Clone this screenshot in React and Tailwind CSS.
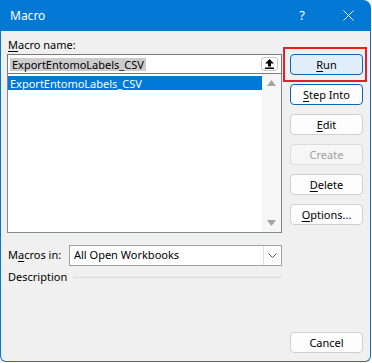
import React from "react";

const font = { fontFamily: "'Noto Sans', 'Open Sans', sans-serif" };

const Btn = ({ children, variant = "normal" }) => {
  const styles = {
    primary: "border-[#0067c0] bg-[#e0eef9] text-black",
    focus: "border-[#0067c0] bg-[#fdfdfd] text-black",
    normal: "border-[#d0d0d0] bg-[#fdfdfd] text-black",
    disabled: "border-[#dcdcdc] bg-[#f6f6f6] text-[#a0a0a0]",
  };
  return (
    <div
      className={`flex h-[21px] w-[73px] items-center justify-center rounded-[4px] border text-[11px] leading-none ${styles[variant]}`}
    >
      {children}
    </div>
  );
};

const U = ({ children }) => <span className="underline underline-offset-2">{children}</span>;

export default function App() {
  return (
    <div className="relative h-[363px] w-[372px] bg-white" style={font}>
      <div className="flex h-[362px] w-[371px] flex-col overflow-hidden rounded-tr-[8px] rounded-b-[6px] bg-[#0078d4]">
        {/* Title bar */}
        <div className="flex h-[31px] shrink-0 items-center pl-[10px] text-[12px] text-white">
          <span>Macro</span>
          <span className="ml-auto mr-[38px] text-[13px]">?</span>
          <svg width="11" height="11" viewBox="0 0 11 11" className="mr-[17px]">
            <path d="M0.5 0.5 L10.5 10.5 M10.5 0.5 L0.5 10.5" stroke="white" strokeWidth="1" />
          </svg>
        </div>

        {/* Body */}
        <div className="mx-px mb-px flex flex-1 rounded-b-[5px] bg-[#f0f0f0] pl-[6px] pr-[6px]">
          {/* Left column */}
          <div className="flex w-[275px] flex-col">
            <div className="mt-[6px] mb-px h-[16px] pl-px text-[11px] leading-[16px] text-black">
              <U>M</U>acro name:
            </div>
            <div className="flex h-[20px] items-center border border-[#7a7a7a] bg-white pl-[2px] pr-[2px]">
              <span className="bg-[#cccccc] px-[2px] text-[11px] leading-[13px] text-black">ExportEntomoLabels_CSV</span>
              <div className="ml-auto mr-[1px] flex h-[14px] w-[17px] items-center justify-center rounded-[3px] border border-[#c8c8c8] bg-white">
                <svg width="9" height="10" viewBox="0 0 9 10">
                  <path d="M4.5 0 L9 4.5 L6 4.5 L6 7.5 L3 7.5 L3 4.5 L0 4.5 Z" fill="black" />
                  <rect x="0" y="8.5" width="9" height="1.5" fill="black" />
                </svg>
              </div>
            </div>
            <div className="flex h-[159px] border border-t-0 border-[#828790] bg-white">
              <div className="flex-1 pt-[2px]">
                <div className="flex h-[14px] items-center bg-[#0078d7] pl-[2px] text-[11px] leading-none text-white">
                  ExportEntomoLabels_CSV
                </div>
              </div>
              <div className="flex w-[19px] flex-col items-center justify-between bg-[#f6f6f6] py-[6px]">
                <svg width="9" height="6" viewBox="0 0 9 6">
                  <path d="M4.5 0 L9 6 L0 6 Z" fill="#a3a3a3" />
                </svg>
                <svg width="9" height="6" viewBox="0 0 9 6">
                  <path d="M0 0 L9 0 L4.5 6 Z" fill="#a3a3a3" />
                </svg>
              </div>
            </div>

            <div className="mt-[12px] flex h-[21px] items-center">
              <div className="w-[62px] pl-px text-[11px] text-black">
                M<U>a</U>cros in:
              </div>
              <div className="flex h-[21px] flex-1 items-center border border-[#a0a0a0] bg-white pl-[4px] text-[11px] text-black">
                <span>All Open Workbooks</span>
                <div className="ml-auto flex h-full w-[18px] items-center justify-center border-l border-[#e0e0e0]">
                  <svg width="9" height="5" viewBox="0 0 9 5">
                    <path d="M0.5 0.5 L4.5 4.5 L8.5 0.5" stroke="#555" strokeWidth="1" fill="none" />
                  </svg>
                </div>
              </div>
            </div>

            <div className="mt-[3px] flex h-[16px] items-center gap-[6px] pl-px">
              <span className="text-[11px] text-black">Description</span>
              <div className="h-px flex-1 bg-[#dcdcdc]" />
            </div>
          </div>

          {/* Right column */}
          <div className="ml-[8px] flex flex-col pt-[23px] pb-[8px]">
            <div className="flex flex-col gap-[9px]">
              <Btn variant="primary">
                <U>R</U>un
              </Btn>
              <Btn variant="focus">
                <U>S</U>tep Into
              </Btn>
              <Btn>
                <U>E</U>dit
              </Btn>
              <Btn variant="disabled">Create</Btn>
              <Btn>
                <U>D</U>elete
              </Btn>
              <Btn>
                <U>O</U>ptions...
              </Btn>
            </div>
            <div className="mt-auto">
              <Btn>Cancel</Btn>
            </div>
          </div>
        </div>
      </div>

      {/* red annotation around Run */}
      <div className="pointer-events-none absolute left-[283px] top-[47px] h-[35px] w-[84px] border-2 border-[#e2202c]" />
    </div>
  );
}
